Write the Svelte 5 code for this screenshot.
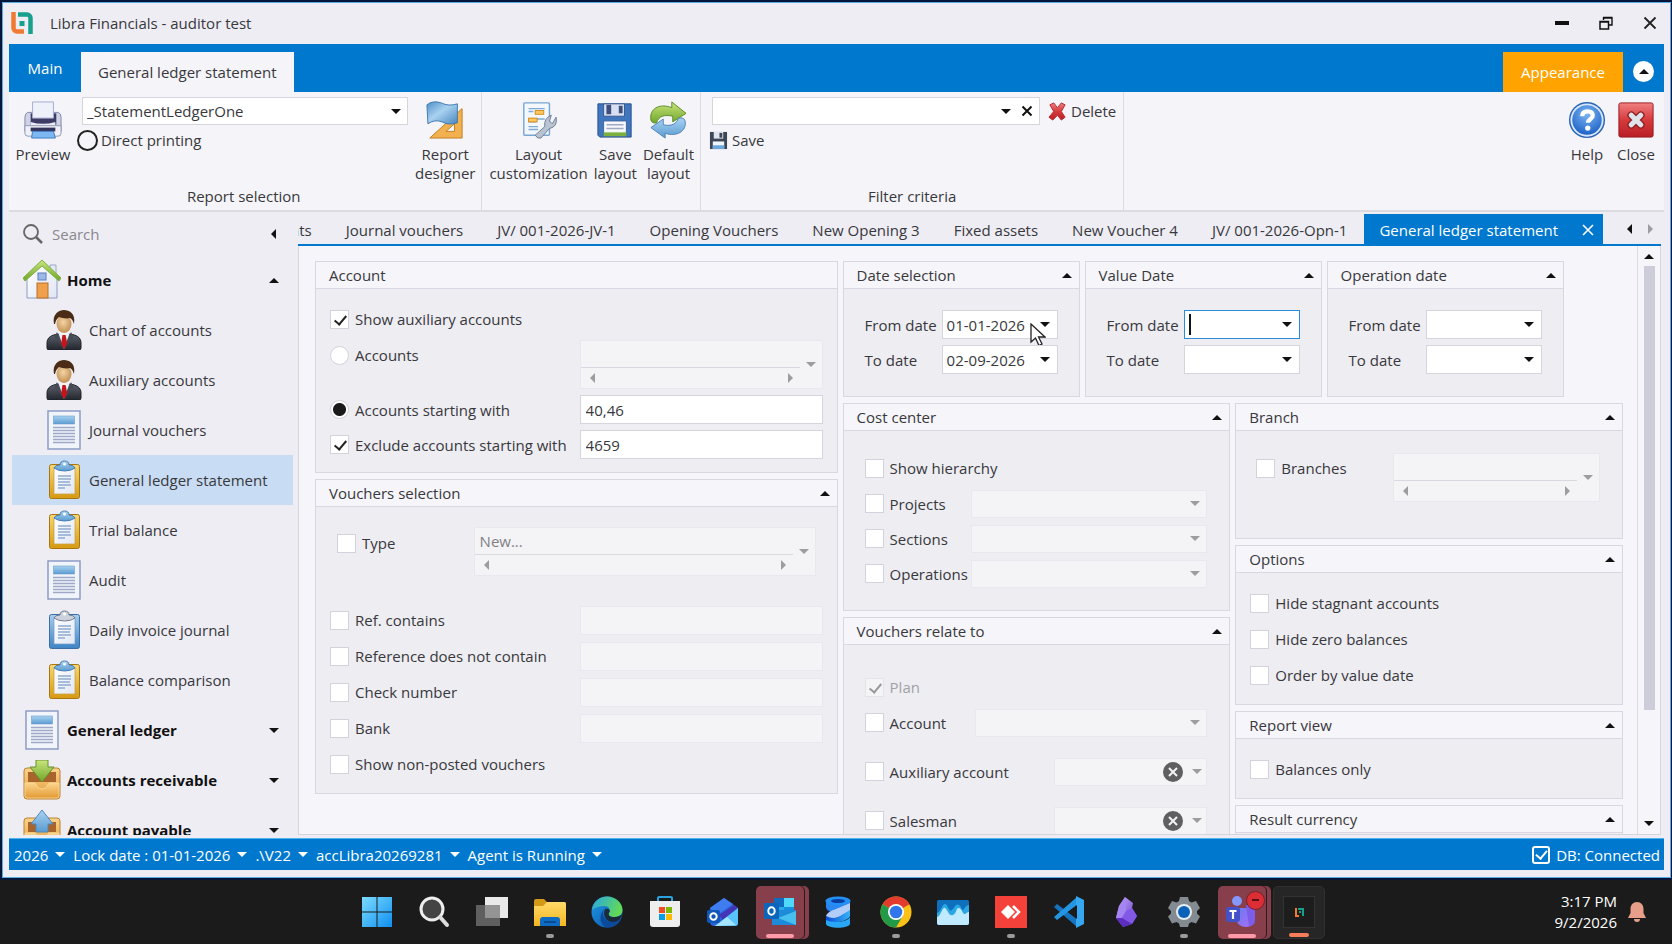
<script>
  const docTabs = [
    'Accounts',
    'Journal vouchers',
    'JV/ 001-2026-JV-1',
    'Opening Vouchers',
    'New Opening 3',
    'Fixed assets',
    'New Voucher 4',
    'JV/ 001-2026-Opn-1'
  ];

  const nav = [
    { label: 'Home', icon: 'home', group: true, open: true },
    { label: 'Chart of accounts', icon: 'person' },
    { label: 'Auxiliary accounts', icon: 'person' },
    { label: 'Journal vouchers', icon: 'page' },
    { label: 'General ledger statement', icon: 'clipGold', selected: true },
    { label: 'Trial balance', icon: 'clipGold' },
    { label: 'Audit', icon: 'page' },
    { label: 'Daily invoice journal', icon: 'clipBlue' },
    { label: 'Balance comparison', icon: 'clipGold' },
    { label: 'General ledger', icon: 'page', group: true },
    { label: 'Accounts receivable', icon: 'trayIn', group: true },
    { label: 'Account payable', icon: 'trayOut', group: true }
  ];

  const refRows = ['Ref. contains', 'Reference does not contain', 'Check number', 'Bank'];
  const costRows = ['Projects', 'Sections', 'Operations'];
  const optionRows = ['Hide stagnant accounts', 'Hide zero balances', 'Order by value date'];
  const statusItems = ['2026', 'Lock date : 01-01-2026', '.\\V22', 'accLibra20269281', 'Agent is Running'];

  const tasks = [
    { name: 'Start', icon: 'start' },
    { name: 'Search', icon: 'search' },
    { name: 'Task view', icon: 'taskview' },
    { name: 'File Explorer', icon: 'explorer', run: true },
    { name: 'Edge', icon: 'edge' },
    { name: 'Store', icon: 'store' },
    { name: 'Mail', icon: 'mail' },
    { name: 'Outlook', icon: 'outlook', alert: true },
    { name: 'Database', icon: 'database' },
    { name: 'Chrome', icon: 'chrome', run: true },
    { name: 'Monitor', icon: 'monitor' },
    { name: 'Remote desktop', icon: 'remote', run: true },
    { name: 'Code', icon: 'code' },
    { name: 'Notes', icon: 'crystal' },
    { name: 'Settings', icon: 'gear', run: true },
    { name: 'Teams', icon: 'teams', alert: true },
    { name: 'Libra', icon: 'libra', current: true }
  ];
</script>

<svg class="defs" width="0" height="0" aria-hidden="true">
  <defs>
    <linearGradient id="gold" x1="0" y1="0" x2="0" y2="1"><stop offset="0" stop-color="#f6d873" /><stop offset="1" stop-color="#d79a12" /></linearGradient>
    <linearGradient id="blueboard" x1="0" y1="0" x2="0" y2="1"><stop offset="0" stop-color="#a8cdec" /><stop offset="1" stop-color="#3f84c4" /></linearGradient>
    <linearGradient id="paper" x1="0" y1="0" x2="1" y2="1"><stop offset="0" stop-color="#ffffff" /><stop offset="1" stop-color="#dfe6f4" /></linearGradient>
    <linearGradient id="sky" x1="0" y1="0" x2="0" y2="1"><stop offset="0" stop-color="#a9d4f2" /><stop offset="1" stop-color="#5b9bd0" /></linearGradient>
    <linearGradient id="tray" x1="0" y1="0" x2="0" y2="1"><stop offset="0" stop-color="#fbd48c" /><stop offset="1" stop-color="#e39a35" /></linearGradient>
    <linearGradient id="leaf" x1="0" y1="0" x2="0" y2="1"><stop offset="0" stop-color="#c9e57c" /><stop offset="1" stop-color="#6fa62a" /></linearGradient>
    <linearGradient id="suit" x1="0" y1="0" x2="0" y2="1"><stop offset="0" stop-color="#5c626c" /><stop offset="1" stop-color="#22262d" /></linearGradient>
    <radialGradient id="skin" cx=".45" cy=".4" r=".7"><stop offset="0" stop-color="#f5d4a4" /><stop offset="1" stop-color="#b88448" /></radialGradient>
    <linearGradient id="red" x1="0" y1="0" x2="0" y2="1"><stop offset="0" stop-color="#f08080" /><stop offset=".5" stop-color="#d63a3d" /><stop offset="1" stop-color="#b81f25" /></linearGradient>
    <radialGradient id="helpblue" cx=".5" cy=".3" r=".8"><stop offset="0" stop-color="#7db6f2" /><stop offset="1" stop-color="#1257c0" /></radialGradient>
    <linearGradient id="flagblue" x1="0" y1="0" x2="1" y2="1"><stop offset="0" stop-color="#4f8fc8" /><stop offset=".45" stop-color="#a9d2f0" /><stop offset="1" stop-color="#4a86c0" /></linearGradient>
    <linearGradient id="winblue" x1="0" y1="0" x2="1" y2="1"><stop offset="0" stop-color="#7ddcff" /><stop offset="1" stop-color="#0f8ff0" /></linearGradient>
    <linearGradient id="folder" x1="0" y1="0" x2="0" y2="1"><stop offset="0" stop-color="#ffdb6a" /><stop offset="1" stop-color="#f5b51f" /></linearGradient>
    <linearGradient id="edgeA" x1="0" y1="0" x2="1" y2="1"><stop offset="0" stop-color="#1f9ae6" /><stop offset="1" stop-color="#0b4fa5" /></linearGradient>
    <linearGradient id="edgeB" x1="0" y1="0" x2="1" y2=".4"><stop offset="0" stop-color="#27a6e8" /><stop offset="1" stop-color="#62d957" /></linearGradient>
    <linearGradient id="ribbonA" x1="0" y1="0" x2="1" y2="0"><stop offset="0" stop-color="#0a4bd8" /><stop offset="1" stop-color="#35b4f7" /></linearGradient>
    <linearGradient id="violet" x1="0" y1="0" x2="1" y2="1"><stop offset="0" stop-color="#c9aefc" /><stop offset="1" stop-color="#5c2fc4" /></linearGradient>
    <linearGradient id="teamsg" x1="0" y1="0" x2="1" y2="1"><stop offset="0" stop-color="#6a7bf2" /><stop offset="1" stop-color="#a86df5" /></linearGradient>
  </defs>
</svg>

{#snippet tri(dir)}
  <svg class="tri" class:side={dir === 'left' || dir === 'right'} viewBox={dir === 'left' || dir === 'right' ? '0 0 5 10' : '0 0 10 5'} aria-hidden="true">
    {#if dir === 'up'}<path d="M0 5 5 0l5 5z" />
    {:else if dir === 'down'}<path d="M0 0h10L5 5z" />
    {:else if dir === 'left'}<path d="M5 0v10L0 5z" />
    {:else}<path d="M0 0v10l5-5z" />{/if}
  </svg>
{/snippet}

{#snippet logo()}
  <svg viewBox="0 0 22 22" aria-hidden="true">
    <path d="M2.500 0v16a3.500 3.500 0 0 0 3.500 3.500H13" fill="none" stroke="#f07a32" stroke-width="4.500" />
    <path d="M7 2.500h9a3.500 3.500 0 0 1 3.500 3.500V22" fill="none" stroke="#17a08e" stroke-width="4.500" />
    <rect x="8.500" y="9" width="5" height="5" fill="#17a08e" />
  </svg>
{/snippet}

{#snippet navIcon(kind)}
  <svg class="nav-icon" viewBox="0 0 38 40" aria-hidden="true">
    {#if kind === 'home'}
      <path d="M27 5h6v12h-6z" fill="#e4e9f5" stroke="#9aa9c8" />
      <path d="M4 18 19 5l15 13v20H4z" fill="url(#paper)" stroke="#8e9cc2" />
      <path d="M0 18 19 0l19 18-2 3L19 6 2 21z" fill="url(#leaf)" stroke="#7fb03a" />
      <rect x="15" y="13" width="8" height="7" fill="#9db9ea" stroke="#5f7dba" />
      <rect x="14" y="23" width="11" height="15" fill="#f0a04a" stroke="#b8702a" />
    {:else if kind === 'person'}
      <path d="M2 38v-5c0-6 5-8 11-9h12c6 1 11 3 11 9v5q0 2-2 2H4q-2 0-2-2z" fill="url(#suit)" stroke="#1e2127" />
      <path d="m13 22 6 17 6-17z" fill="#f2f2f4" />
      <path d="m17.500 25h3l2 9-3.500 5-3-5z" fill="#c4151c" />
      <path d="m12 22-3 6 4 1 5 10-6-17zM26 22l3 6-4 1-5 10 6-17z" fill="#454b55" />
      <ellipse cx="19" cy="14" rx="7.500" ry="9" fill="url(#skin)" />
      <path d="M9 14C7 4 14 0 19 0s12 3 10 14c-1-3-2-5-4-6-4 1-8 0-11-1-2 2-3 3-4 7z" fill="#4a2c17" />
    {:else if kind === 'page'}
      <rect x="3" y="1" width="32" height="38" fill="#f1f4fb" stroke="#8d9cc6" stroke-width="1.500" />
      <rect x="8.500" y="6" width="21" height="8" fill="url(#sky)" stroke="#6f9fca" stroke-width=".6" />
      <path d="M8 17.500h22M8 20.500h22M8 23.500h22M8 26.500h22M8 29.500h22M8 32.500h22" stroke="#9fa9c7" stroke-width="1.500" />
    {:else if kind === 'clipGold' || kind === 'clipBlue'}
      <rect x="4.500" y="4.500" width="30" height="34" rx="2" fill={kind === 'clipGold' ? 'url(#gold)' : 'url(#blueboard)'} stroke={kind === 'clipGold' ? '#a8750f' : '#3a6ea6'} />
      <rect x="9" y="8" width="21" height="26" fill="url(#paper)" stroke={kind === 'clipGold' ? '#c89a3a' : '#6d9cc8'} stroke-width=".7" />
      <path d="M13 16h13M13 19h13M13 22h12M13 25h13M13 28h7" stroke="#8fabd0" stroke-width="1.300" />
      <path d="M9 8q1-3 6-3 0-4 4.500-4T24 5q5 0 6 3-4 3-10.500 3T9 8z" fill={kind === 'clipGold' ? 'url(#sky)' : '#cdd2dc'} stroke={kind === 'clipGold' ? '#477fb9' : '#737d8e'} />
      <circle cx="19.500" cy="4" r="1.500" fill="#fff" />
    {:else if kind === 'trayIn' || kind === 'trayOut'}
      <rect x="1" y="8" width="36" height="31" rx="3" fill="url(#tray)" stroke="#b98134" />
      <path d="M5 12h28v10H5z" fill="#a8642a" />
      <path d="M2 23h9q2 0 3 3 1 3 5 3t5-3q1-3 3-3h9v13q0 2-2 2H4q-2 0-2-2z" fill="url(#tray)" stroke="#f9dc9e" stroke-width=".8" />
      {#if kind === 'trayIn'}
        <path d="M13 0h12v7h6L19 22 7 7h6z" fill="url(#leaf)" stroke="#66902c" />
      {:else}
        <path d="m19 0 11 14h-5v8H13v-8H8z" fill="url(#sky)" stroke="#4f86bd" />
      {/if}
    {/if}
  </svg>
{/snippet}

{#snippet ribbonIcon(kind)}
  <svg class="big-icon" viewBox="0 0 40 40" aria-hidden="true">
    {#if kind === 'printer'}
      <path d="M4 12q-3 1-3 5v15h38V17q0-4-3-5z" fill="#cfd3e6" stroke="#7e84a8" />
      <path d="M7 13h27v12H7z" fill="#3d3c66" />
      <path d="M9 1h22v17H9z" fill="#eef0fa" stroke="#a6abd0" />
      <path d="M7 22q13 4 26 0v6H7z" fill="#e9ebf5" />
      <path d="M1 26h38v8q0 3-3 3H4q-3 0-3-3z" fill="#f0f1f8" stroke="#8e93b4" />
      <path d="M7 28h26v4H7z" fill="#33345c" />
      <path d="M9 32h22l2 7H8z" fill="#7db8f3" stroke="#3f79ba" />
    {:else if kind === 'designer'}
      <path d="M38 8v31H4z" fill="#f3b04e" stroke="#c07d22" />
      <path d="M30 24v8h-9z" fill="#f5f4f8" stroke="#c07d22" />
      <path d="M1 4q6-5 15-2 8 4 17 1v20q-9 3-16-1-8-3-15 2z" fill="url(#flagblue)" stroke="#3e78af" />
    {:else if kind === 'custom'}
      <rect x="4" y="2" width="27" height="34" rx="1" fill="#f3f8fe" stroke="#79a5d2" stroke-width="1.500" />
      <path d="M9 8h17M9 11h5M9 19h17M9 22h8M9 27h10M9 30h10" stroke="#7fa9d6" stroke-width="1.500" />
      <rect x="16" y="10" width="9" height="4" fill="#ffc65c" stroke="#d18f1f" />
      <rect x="9" y="18" width="9" height="4" fill="#ffc65c" stroke="#d18f1f" />
      <path d="M38 17q2 10-7 12l-9 10q-4 1-6-3l10-9q-1-9 7-12l-2 6 3 3z" fill="#b9c3d2" stroke="#6d7c94" />
    {:else if kind === 'floppy'}
      <path d="M2 3h35v35H4l-2-2z" fill="#4076bd" stroke="#244f8c" />
      <path d="M8 3h22v13H8z" fill="#d9dff0" stroke="#38598e" />
      <path d="M11 4h5v10h-5zM24 5h4v8h-4z" fill="#3d4f7c" />
      <path d="M8 21h24v16H8z" fill="#f6f8fc" stroke="#3a639c" />
      <path d="M11 25h18M11 29h18" stroke="#9faac2" stroke-width="1.500" />
      <path d="M8 33h24v4H8z" fill="#7bb040" />
    {:else if kind === 'refresh'}
      <path d="M2 20C0 8 11 2 24 7V1l15 12-14 9v-6c-9-2-15 0-17 7q-5 1-6-3z" fill="url(#leaf)" stroke="#5e8b2b" />
      <path d="M38 21c2 11-9 17-21 13v5L2 28l13-9v6c9 2 14-1 16-7q6-1 7 3z" fill="url(#sky)" stroke="#4e82b6" />
    {:else if kind === 'help'}
      <circle cx="20" cy="20" r="19" fill="#2c65b5" />
      <circle cx="20" cy="20" r="17.500" fill="#d7e7fb" />
      <circle cx="20" cy="20" r="15.500" fill="url(#helpblue)" />
      <path d="M15 16q0-5 5.500-5t5.500 4.500c0 3.500-5 3.500-5 7.500" fill="none" stroke="#fff" stroke-width="4.500" />
      <circle cx="20.800" cy="28.500" r="2.800" fill="#fff" />
    {:else}
      <rect x="2" y="2" width="36" height="36" rx="2" fill="url(#red)" stroke="#98191d" />
      <path d="m15 15 10 10M25 15 15 25" stroke="#8e1e22" stroke-width="8" stroke-linecap="round" />
      <path d="m15 15 10 10M25 15 15 25" stroke="#dfe3ea" stroke-width="5.500" stroke-linecap="round" />
    {/if}
  </svg>
{/snippet}

{#snippet taskIcon(kind)}
  <svg class="task-icon" viewBox="0 0 32 32" aria-hidden="true">
    {#if kind === 'start'}
      <path d="M1 1h14.500v14.500H1zM16.500 1H31v14.500H16.500zM1 16.500h14.500V31H1zM16.500 16.500H31V31H16.500z" fill="url(#winblue)" />
    {:else if kind === 'search'}
      <circle cx="14" cy="13" r="11" fill="#444" stroke="#eee" stroke-width="3" />
      <path d="m22 21 7 8" stroke="#ddd" stroke-width="4" stroke-linecap="round" />
    {:else if kind === 'taskview'}
      <path d="M9 1h23v21H9z" fill="#e9e9e9" />
      <path d="M0 9h24v21H0z" fill="#777" fill-opacity=".75" />
    {:else if kind === 'explorer'}
      <path d="M0 5q0-2 2-2h8l3 3h17q2 0 2 2v6H0z" fill="#d39a17" />
      <path d="M0 10h9l4-4h17q2 0 2 2v22H0z" fill="url(#folder)" />
      <path d="M6 30v-6q0-3 3-3h14q3 0 3 3v6z" fill="#0f6cc4" />
      <path d="M10 26h12" stroke="#0a3f7c" stroke-width="1.500" />
    {:else if kind === 'edge'}
      <circle cx="16" cy="16" r="15.500" fill="url(#edgeA)" />
      <path d="M1 14C2 5 9 .5 16 .5 25 .5 31.500 7 31.500 14c0 5-4 7-8 7-5 0-7-2-5-5 1-3-1-6-5-6-5 0-9 1-12.500 4z" fill="url(#edgeB)" />
      <path d="M13 13c-3 6 1 13 9 13 3 0 6-1 8-3-3 6-8 9-14 8.500C9 30 7 20 13 13z" fill="#0c4a9c" />
      <path d="M18.500 16c-2 3 0 5 5 5 3 0 6-1 7.500-3-1 5-4 8-9 8-7 0-11-7-8-13 3-1 6 1 4.500 3z" fill="#1b1b1b" opacity=".8" />
    {:else if kind === 'store'}
      <path d="M9 7V2q0-1 1-1h12q1 0 1 1v5" fill="none" stroke="#2aa2e0" stroke-width="2" />
      <path d="M1 5h30v23q0 3-3 3H4q-3 0-3-3z" fill="#eee" />
      <path d="M10 11h6v6h-6z" fill="#f04e22" /><path d="M17 11h6v6h-6z" fill="#7cb900" />
      <path d="M10 18h6v6h-6z" fill="#069ee4" /><path d="M17 18h6v6h-6z" fill="#fdb900" />
    {:else if kind === 'mail'}
      <path d="M3 12 17 2l14 10v15q0 3-3 3H7q-3 0-4-3z" fill="#2b63d9" />
      <path d="M3 12 17 2l9 6-16 11z" fill="#3f7cf0" />
      <path d="m12 19 15-10 4 3-15 12z" fill="#4534b6" />
      <path d="M31 12v15q0 3-3 3H8z" fill="#59c3fb" />
      <path d="M8 30 20 21l9 8z" fill="#a5e4ff" />
      <rect x="0" y="14" width="13" height="13" rx="2" fill="#0f57b8" />
      <circle cx="6.500" cy="20.500" r="3.200" fill="none" stroke="#fff" stroke-width="2" />
    {:else if kind === 'outlook'}
      <path d="M10 2h20v18H10z" fill="#28a8ea" />
      <path d="M10 2h10v9H10z" fill="#0f6cc0" /><path d="M20 2h10v9H20z" fill="#50d9ff" /><path d="M20 11h10v9H20z" fill="#1490df" />
      <path d="M8 14h24v15H8z" fill="#1d8bd8" /><path d="M32 15v14L14 22z" fill="#47c0f0" />
      <rect x="0" y="7" width="15" height="16" rx="1" fill="#0b66bb" />
      <ellipse cx="7.500" cy="15" rx="3.200" ry="3.800" fill="none" stroke="#fff" stroke-width="2" />
    {:else if kind === 'database'}
      <path d="M4 5v6c0 4 5 6 12 6s12 1 12 6v-6c0-3-4-5-10-6L4 5z" fill="#1567dd" />
      <path d="M4 5v6q2 5 10 5l14-5V5q-3 4-12 4T4 5z" fill="#2a86f0" />
      <path d="M4 25v-5q1-4 10-7l14-6v7q-1 4-11 7-8 2-13 4z" fill="#b3cdfb" />
      <path d="M4 20q8 4 14 0l10-6v6q-2 4-11 6L4 26z" fill="url(#ribbonA)" />
      <ellipse cx="16" cy="5" rx="12.500" ry="4.500" fill="#2490f5" />
      <ellipse cx="16" cy="5" rx="7" ry="2" fill="#0a3d9e" />
      <path d="M4 24v4c2 5 22 5 24 0v-7c-3 6-19 6-24 3z" fill="#28a7f8" />
    {:else if kind === 'chrome'}
      <circle cx="16" cy="16" r="15.500" fill="#fbc116" />
      <path d="M16 16 2.600 8.200A15.500 15.500 0 0 1 29.400 8.200z" fill="#e33b2e" />
      <path d="M2.600 8.200A15.500 15.500 0 0 0 16 31.500L22.700 20 16 16z" fill="#229a48" />
      <circle cx="16" cy="16" r="8" fill="#fff" /><circle cx="16" cy="16" r="6.300" fill="#2f76ea" />
    {:else if kind === 'monitor'}
      <rect y="4" width="32" height="25" rx="1.500" fill="#0e6fbd" />
      <path d="M0 17c4-1 5-9 8-9s4 9 7 6 4-7 7-5 3 7 5 4 3-4 5-4v17H0z" fill="#2aa7e4" />
      <path d="M0 21c4 0 5-11 8-9s4 9 8 7 3-8 6-7 4 7 6 6 2-2 4-2v11q0 2-2 2H2q-2 0-2-2z" fill="#bfeaff" />
    {:else if kind === 'remote'}
      <path d="M0 0h32v32H0z" fill="#f4423a" />
      <path d="m6 16 7-7 7 7-7 7z" fill="#fff" /><path d="m18 10 6 6-6 6" fill="none" stroke="#fff" stroke-width="2.500" />
    {:else if kind === 'code'}
      <path d="m1 11 3-3 20 15v8z" fill="#1673bf" />
      <path d="m1 21 3 3L24 9V1z" fill="#2495e0" />
      <path d="m23 0 8 4v24l-8 4z" fill="#36a8f2" />
      <path d="m24 9-9 7 9 7z" fill="#1b1b1b" />
    {:else if kind === 'crystal'}
      <path d="m15 1 8 6-1 5 5 8-5 8-9 3-7-9 3-12z" fill="url(#violet)" />
      <path d="m15 1 1 14-4 7-6 0 3-12z" fill="#a485f2" />
      <path d="m16 15 6-3 5 8-5 8-10-6z" fill="#8258e6" /><path d="m12 22 10 6-9 3-7-9z" fill="#5b2dc0" />
    {:else if kind === 'gear'}
      <path d="M12 1h8l1 4 2.500 1.500L28 5l4 7-3 3v2.500l3 3-4 7-4.500-1.500L21 27.500 20 31h-8l-1-3.500L8.500 26 4 27.500l-4-7 3-3V15l-3-3 4-7 4.500 1.500L11 5z" fill="#848a91" />
      <circle cx="16" cy="16" r="8" fill="#e6edf5" /><circle cx="16" cy="16" r="6" fill="#0b62b8" />
    {:else if kind === 'teams'}
      <circle cx="11" cy="5" r="5" fill="#8497fb" />
      <path d="M10 12h18v11q0 8-8 8t-10-8z" fill="url(#teamsg)" /><path d="M20 9h9v15q0 6-6 6z" fill="#7c5ce8" />
      <rect x="0" y="11" width="14" height="15" rx="3" fill="#4451c8" />
      <path d="M3.500 15h7M7 15v8" stroke="#fff" stroke-width="2.200" />
    {:else if kind === 'libra'}
      <rect x=".5" y=".5" width="31" height="31" fill="#1d1d1d" stroke="#333" />
      <path d="M13 12v8h3" fill="none" stroke="#f07a32" stroke-width="2" /><path d="M15 13h5v7" fill="none" stroke="#17a08e" stroke-width="2" /><path d="M16 15h2v2h-2z" fill="#17a08e" />
    {/if}
  </svg>
{/snippet}

{#snippet check(label, opts = {})}
  <label class="check" class:off={opts.disabled}>
    <input type="checkbox" checked={opts.checked} disabled={opts.disabled} />
    <span>{label}</span>
  </label>
{/snippet}

{#snippet multi(label, text = '')}
  <div class="multi">
    <div class="multi-body">
      <input type="text" aria-label={label} value={text} disabled />
      <div class="multi-scroll">
        <button type="button" disabled aria-label="Scroll left">{@render tri('left')}</button>
        <button type="button" disabled aria-label="Scroll right">{@render tri('right')}</button>
      </div>
    </div>
    <button type="button" class="multi-drop" disabled aria-label="Open list">{@render tri('down')}</button>
  </div>
{/snippet}

{#snippet combo(label, clear = false)}
  <div class="combo off">
    <select aria-label={label} disabled><option></option></select>
    {#if clear}
      <svg class="clear" viewBox="0 0 20 20" aria-hidden="true"><circle cx="10" cy="10" r="10" fill="#5f5f61" /><path d="m6 6 8 8M14 6l-8 8" stroke="#f3f3f7" stroke-width="2" /></svg>
    {/if}
    {@render tri('down')}
  </div>
{/snippet}

{#snippet dateRow(id, label, value, opts = {})}
  <div class="date-row">
    <label for={id}>{label}</label>
    <div class="date" class:active={opts.active}>
      {#if opts.active}<span class="caret"></span>{/if}
      <input {id} type="text" {value} />
      <button type="button" aria-label="Pick a date">{@render tri('down')}</button>
      {#if opts.pointer}
        <svg class="pointer" viewBox="0 0 16 24" aria-hidden="true"><path d="M1 1v18l4.500-4 3.500 7.500 3-1.500-3.500-7H15z" fill="#fff" stroke="#222" stroke-width="1.300" /></svg>
      {/if}
    </div>
  </div>
{/snippet}

{#snippet head(title, fold = true)}
  <header class="panel-head">
    <h2>{title}</h2>
    {#if fold}<button type="button" aria-label="Collapse {title}">{@render tri('up')}</button>{/if}
  </header>
{/snippet}

<div class="desktop">
  <div class="window">
    <div class="titlebar">
      <span class="logo">{@render logo()}</span>
      <h1>Libra Financials - auditor test</h1>
      <div class="win-buttons">
        <button type="button" aria-label="Minimize"><svg viewBox="0 0 14 14"><path d="M0 5h14v4H0z" fill="#111" /></svg></button>
        <button type="button" aria-label="Restore"><svg viewBox="0 0 14 14"><path d="M4.500 4V2h8.500v7h-3M4 1.500h9.500" fill="none" stroke="#111" stroke-width="1.400" /><path d="M1 5.500h8.500V13H1zM.5 6h9.500" fill="none" stroke="#111" stroke-width="1.500" /></svg></button>
        <button type="button" aria-label="Close window"><svg viewBox="0 0 14 14"><path d="m1.500 1.500 11 11M12.500 1.500l-11 11" stroke="#222" stroke-width="1.800" /></svg></button>
      </div>
    </div>

    <div class="ribbon-tabs">
      <button type="button" class="main-tab">Main</button>
      <button type="button" class="ribbon-tab">General ledger statement</button>
      <button type="button" class="appearance">Appearance</button>
      <button type="button" class="round" aria-label="Collapse ribbon">{@render tri('up')}</button>
    </div>

    <div class="ribbon">
      <section class="group g-report">
        <div class="group-row">
          <button type="button" class="big preview">{@render ribbonIcon('printer')}<span>Preview</span></button>
          <div class="stack">
            <div class="combo">
              <select aria-label="Report"><option>_StatementLedgerOne</option></select>
              {@render tri('down')}
            </div>
            <label class="direct"><input type="radio" name="direct" /><span>Direct printing</span></label>
          </div>
          <button type="button" class="big">{@render ribbonIcon('designer')}<span>Report<br />designer</span></button>
        </div>
        <p>Report selection</p>
      </section>
      <section class="group">
        <div class="group-row tools">
          <button type="button" class="big">{@render ribbonIcon('custom')}<span>Layout<br />customization</span></button>
          <button type="button" class="big">{@render ribbonIcon('floppy')}<span>Save<br />layout</span></button>
          <button type="button" class="big">{@render ribbonIcon('refresh')}<span>Default<br />layout</span></button>
        </div>
      </section>
      <section class="group g-filter">
        <div class="filter">
          <div class="filter-row">
            <div class="combo">
              <select aria-label="Filter"><option></option></select>
              {@render tri('down')}
              <button type="button" class="x" aria-label="Clear filter"><svg viewBox="0 0 12 12"><path d="m1.500 1.500 9 9M10.500 1.500l-9 9" stroke="#111" stroke-width="2" /></svg></button>
            </div>
            <button type="button" class="small">
              <svg viewBox="0 0 20 20" aria-hidden="true"><path d="M2 3 6 1l4 5 4-5 4 2-4 7 4 6-4 3-4-5-5 5-4-3 5-6z" fill="url(#red)" stroke="#b3262b" /></svg>Delete
            </button>
          </div>
          <button type="button" class="small save">
            <svg viewBox="0 0 20 20" aria-hidden="true"><path d="M1 1h18v18H1z" fill="#3c4654" /><path d="M5 1h10v7H5z" fill="#dfe5ee" /><path d="M11 2h3v5h-3z" fill="#3c4654" /><path d="M4 11h12v8H4z" fill="#eef5fb" /><path d="M4 15h12v4H4z" fill="#6aa7dc" /></svg>Save
          </button>
        </div>
        <p>Filter criteria</p>
      </section>
      <div class="group-row end">
        <button type="button" class="big">{@render ribbonIcon('help')}<span>Help</span></button>
        <button type="button" class="big">{@render ribbonIcon('close')}<span>Close</span></button>
      </div>
    </div>

    <div class="work">
      <aside class="sidebar">
        <div class="search">
          <svg viewBox="0 0 20 20" aria-hidden="true"><circle cx="8" cy="8" r="7" fill="none" stroke="#666" stroke-width="1.800" /><path d="m13 13 6 6" stroke="#666" stroke-width="2.500" /></svg>
          <input type="text" placeholder="Search" aria-label="Search" />
          <button type="button" aria-label="Hide navigation">{@render tri('left')}</button>
        </div>
        <nav>
          {#each nav as item}
            <a href="#top" class:group-link={item.group} class:selected={item.selected}>
              {@render navIcon(item.icon)}
              <span>{item.label}</span>
              {#if item.group}{@render tri(item.open ? 'up' : 'down')}{/if}
            </a>
          {/each}
        </nav>
      </aside>

      <main>
        <div class="tab-strip">
          <div class="tabs">
            {#each docTabs as tab}<button type="button" class="doc-tab">{tab}</button>{/each}
            <button type="button" class="doc-tab current">
              General ledger statement
              <svg viewBox="0 0 12 12" aria-hidden="true"><path d="m1 1 10 10M11 1 1 11" stroke="#fff" stroke-width="1.600" /></svg>
            </button>
          </div>
          <button type="button" class="tab-nav" aria-label="Previous tabs">{@render tri('left')}</button>
          <button type="button" class="tab-nav dim" aria-label="Next tabs">{@render tri('right')}</button>
        </div>

        <div class="content">
          <div class="form">
            <div class="col">
              <section class="panel">
                {@render head('Account', false)}
                <div class="rows account">
                  <div class="row">{@render check('Show auxiliary accounts', { checked: true })}</div>
                  <div class="row tall">
                    <label class="check"><input type="radio" name="mode" /><span>Accounts</span></label>
                    {@render multi('Accounts list')}
                  </div>
                  <div class="row tight">
                    <label class="check"><input type="radio" name="mode" checked /><span>Accounts starting with</span></label>
                    <input class="text" type="text" aria-label="Account prefixes" value="40,46" />
                  </div>
                  <div class="row tight">
                    {@render check('Exclude accounts starting with', { checked: true })}
                    <input class="text" type="text" aria-label="Excluded prefixes" value="4659" />
                  </div>
                </div>
              </section>
              <section class="panel">
                {@render head('Vouchers selection')}
                <div class="rows vouchers">
                  <div class="row type">{@render check('Type')}{@render multi('Voucher type', 'New...')}</div>
                  {#each refRows as r}
                    <div class="row">{@render check(r)}<input class="text" type="text" aria-label={r} disabled /></div>
                  {/each}
                  <div class="row">{@render check('Show non-posted vouchers')}</div>
                </div>
              </section>
            </div>

            <div class="col">
              <div class="dates">
                <section class="panel">
                  {@render head('Date selection')}
                  <div class="date-body">{@render dateRow('d1', 'From date', '01-01-2026', { pointer: true })}{@render dateRow('d2', 'To date', '02-09-2026')}</div>
                </section>
                <section class="panel">
                  {@render head('Value Date')}
                  <div class="date-body">{@render dateRow('d3', 'From date', '', { active: true })}{@render dateRow('d4', 'To date', '')}</div>
                </section>
                <section class="panel">
                  {@render head('Operation date')}
                  <div class="date-body">{@render dateRow('d5', 'From date', '')}{@render dateRow('d6', 'To date', '')}</div>
                </section>
              </div>
              <div class="pair">
                <div class="col">
                  <section class="panel">
                    {@render head('Cost center')}
                    <div class="rows cost">
                      <div class="row">{@render check('Show hierarchy')}</div>
                      {#each costRows as c}<div class="row tight">{@render check(c)}{@render combo(c)}</div>{/each}
                    </div>
                  </section>
                  <section class="panel">
                    {@render head('Vouchers relate to')}
                    <div class="rows relate">
                      <div class="row">{@render check('Plan', { checked: true, disabled: true })}</div>
                      <div class="row tight">{@render check('Account')}{@render combo('Account')}</div>
                      <div class="row tight short">{@render check('Auxiliary account')}{@render combo('Auxiliary account', true)}</div>
                      <div class="row tight short">{@render check('Salesman')}{@render combo('Salesman', true)}</div>
                    </div>
                  </section>
                </div>
                <div class="col">
                  <section class="panel">
                    {@render head('Branch')}
                    <div class="rows branch"><div class="row">{@render check('Branches')}{@render multi('Branch list')}</div></div>
                  </section>
                  <section class="panel">
                    {@render head('Options')}
                    <div class="rows">{#each optionRows as o}<div class="row">{@render check(o)}</div>{/each}</div>
                  </section>
                  <section class="panel">
                    {@render head('Report view')}
                    <div class="rows"><div class="row">{@render check('Balances only')}</div></div>
                  </section>
                  <section class="panel">
                    {@render head('Result currency')}
                    <div class="rows"></div>
                  </section>
                </div>
              </div>
            </div>
          </div>
          <div class="scrollbar">
            {@render tri('up')}
            <div class="track"><div class="thumb"></div></div>
            {@render tri('down')}
          </div>
        </div>
      </main>
    </div>

    <footer class="status">
      {#each statusItems as s}<button type="button">{s}{@render tri('down')}</button>{/each}
      <label><input type="checkbox" checked /><span>DB: Connected</span></label>
    </footer>
  </div>

  <div class="taskbar">
    <div class="apps">
      {#each tasks as t}
        <button type="button" aria-label={t.name} class:alert={t.alert} class:current={t.current}>
          <span class="tile">
            {@render taskIcon(t.icon)}
            {#if t.icon === 'teams'}<span class="badge"></span>{/if}
            {#if t.run || t.alert || t.current}<span class="mark"></span>{/if}
          </span>
        </button>
      {/each}
    </div>
    <div class="tray">
      <div class="clock"><time>3:17 PM</time><time>9/2/2026</time></div>
      <svg viewBox="0 0 20 22" aria-hidden="true"><path d="M10 1c-4 0-6.500 3-6.500 7v4L1 17h18l-2.500-5V8c0-4-2.500-7-6.500-7zM7 18q0 3 3 3t3-3z" fill="#e79f8a" /></svg>
    </div>
  </div>
</div>

<style>
  :global(body) {
    margin: 0;
    overflow: hidden;
  }
  .defs {
    position: absolute;
  }
  .desktop,
  .desktop * {
    box-sizing: border-box;
  }
  .desktop {
    display: flex;
    flex-direction: column;
    height: 100vh;
    padding-top: 2px;
    background: #04173a;
    color: #38383d;
    font: 15px/20px 'Open Sans', 'Segoe UI', sans-serif;
  }
  button,
  input,
  select {
    margin: 0;
    padding: 0;
    border: 0;
    border-radius: 0;
    background: none;
    color: inherit;
    font: inherit;
    appearance: none;
    outline: none;
    min-width: 0;
  }
  h1,
  h2,
  p {
    margin: 0;
    font: inherit;
  }
  svg {
    display: block;
    flex: none;
  }
  .tri {
    width: 10px;
    height: 5px;
    fill: #111;
  }
  .tri.side {
    width: 5px;
    height: 10px;
  }
  .window {
    flex: 1;
    min-height: 0;
    display: flex;
    flex-direction: column;
    margin: 0 1px 2px 2px;
    padding: 0 6px 7px;
    border: 1px solid #5aa9e2;
    background: #eeedf3;
  }

  /* title bar */
  .titlebar {
    display: flex;
    align-items: center;
    height: 41px;
    padding: 0 7px 2px 2px;
  }
  .logo {
    width: 22px;
    margin-right: 17px;
  }
  h1 {
    flex: 1;
  }
  .win-buttons {
    display: flex;
    gap: 30px;
  }
  .win-buttons svg {
    width: 14px;
    height: 14px;
  }

  /* ribbon */
  .ribbon-tabs {
    display: flex;
    align-items: flex-end;
    height: 48px;
    background: #0078ce;
    color: #fff;
  }
  .main-tab {
    width: 72px;
    height: 48px;
    padding-bottom: 1px;
  }
  .ribbon-tab {
    height: 40px;
    padding: 0 17px;
    background: #f5f4f8;
    color: #38383d;
  }
  .appearance {
    width: 120px;
    height: 40px;
    margin-left: auto;
    background: #ffa300;
  }
  .round {
    display: grid;
    place-items: center;
    width: 21px;
    height: 21px;
    margin: 0 10px 10px;
    border-radius: 50%;
    background: #fff;
  }
  .ribbon {
    display: flex;
    height: 120px;
    border-bottom: 2px solid #dcdbe2;
    background: #f5f4f8;
  }
  .group {
    display: flex;
    flex-direction: column;
    justify-content: space-between;
    border-right: 1px solid #dcdbe2;
  }
  .group p {
    padding-bottom: 4px;
    text-align: center;
  }
  .g-report {
    padding-right: 3px;
  }
  .group-row {
    display: flex;
    align-items: flex-start;
  }
  .big {
    display: flex;
    flex-direction: column;
    align-items: center;
    gap: 5px;
    padding: 8px 3px 0;
    line-height: 19px;
    text-align: center;
  }
  .big-icon {
    width: 38px;
    height: 40px;
  }
  .preview {
    width: 68px;
  }
  .stack {
    padding: 5px 4px 0 5px;
  }
  .tools {
    padding: 0 3px 0 4px;
  }
  .combo {
    display: flex;
    align-items: center;
    gap: 10px;
    height: 28px;
    padding-right: 6px;
    border: 1px solid #d6d5de;
    background: #fff;
  }
  .stack .combo {
    width: 326px;
  }
  .combo select {
    flex: 1;
    height: 100%;
    padding-left: 4px;
    opacity: 1;
  }
  .combo.off {
    background: #f4f4f7;
    border-color: #e9e8ee;
  }
  .off .tri,
  .multi .tri,
  .dim .tri {
    fill: #9c9ca1;
  }
  .direct {
    display: flex;
    align-items: center;
    gap: 3px;
    height: 30px;
    margin-left: -5px;
  }
  .direct input {
    width: 21px;
    height: 21px;
    border: 2px solid #222;
    border-radius: 50%;
  }
  .filter {
    padding: 5px 7px 0 11px;
  }
  .filter-row {
    display: flex;
    gap: 8px;
  }
  .filter .combo {
    width: 328px;
  }
  .x svg {
    width: 12px;
    height: 12px;
  }
  .small {
    display: flex;
    align-items: center;
    gap: 4px;
  }
  .small svg {
    width: 19px;
    height: 19px;
  }
  .save {
    height: 30px;
    margin-left: -3px;
  }
  .end {
    margin-left: auto;
    padding-right: 6px;
    gap: 5px;
  }

  /* navigation */
  .work {
    flex: 1;
    display: flex;
    min-height: 0;
    padding-bottom: 3px;
  }
  .sidebar {
    flex: none;
    width: 289px;
    overflow: hidden;
    padding-left: 3px;
  }
  .search {
    display: flex;
    align-items: center;
    height: 43px;
    padding: 0 22px 0 11px;
  }
  .search svg {
    width: 20px;
    height: 20px;
  }
  .search .tri {
    width: 5px;
    height: 10px;
  }
  .search input {
    flex: 1;
    padding-left: 9px;
  }
  .search input::placeholder {
    color: #88888d;
    opacity: 1;
  }
  nav a {
    display: flex;
    align-items: center;
    height: 50px;
    margin-right: 5px;
    padding: 0 14px 0 33px;
    color: inherit;
    text-decoration: none;
  }
  nav a.group-link {
    padding-left: 11px;
    color: #111;
    font-weight: 700;
  }
  nav a.selected {
    background: #c8dcf3;
  }
  nav span {
    flex: 1;
    padding-left: 6px;
  }
  .nav-icon {
    width: 38px;
    height: 40px;
  }

  /* document area */
  main {
    flex: 1;
    min-width: 0;
    display: flex;
    flex-direction: column;
    padding-right: 3px;
  }
  .tab-strip {
    display: flex;
    align-items: center;
    height: 34px;
    padding-top: 2px;
    border-bottom: 2px solid #0078ce;
  }
  .tabs {
    flex: 1;
    min-width: 0;
    display: flex;
    justify-content: flex-end;
    overflow: hidden;
    margin-right: 16px;
  }
  .doc-tab {
    flex: none;
    display: flex;
    align-items: center;
    gap: 24px;
    height: 30px;
    padding: 2px 17px 0;
    white-space: nowrap;
  }
  .doc-tab.current {
    padding: 2px 9px 0 15px;
    background: #0078ce;
    color: #fff;
  }
  .doc-tab svg {
    width: 12px;
    height: 12px;
  }
  .tab-nav {
    padding: 0 8px;
  }
  .content {
    flex: 1;
    min-height: 0;
    display: flex;
    border: 1px solid #d6d5de;
    border-top: 0;
    background: #f6f5f9;
  }
  .form {
    flex: 1;
    min-width: 0;
    display: grid;
    grid-template-columns: 523fr 781fr;
    gap: 5px;
    overflow: hidden;
    padding: 15px 14px 0 16px;
  }
  .col {
    display: flex;
    flex-direction: column;
    gap: 6px;
    min-width: 0;
  }
  .dates {
    display: flex;
    gap: 5px;
  }
  .dates .panel {
    flex: 0 1 237px;
  }
  .pair {
    display: grid;
    grid-template-columns: 1fr 1fr;
    gap: 5px;
  }
  .panel {
    flex: none;
    border: 1px solid #d8d7e2;
    background: #eeedf2;
  }
  .panel-head {
    display: flex;
    align-items: center;
    justify-content: space-between;
    height: 27px;
    padding: 0 7px 0 13px;
    border-bottom: 1px solid #d8d7e2;
    background: #f6f5f9;
  }
  .rows {
    padding: 12px 14px 11px;
  }
  .row {
    display: flex;
    justify-content: space-between;
    min-height: 36px;
  }
  .row.tight {
    min-height: 35px;
  }
  .row > .text,
  .row > .combo {
    align-self: center;
  }
  .check {
    display: flex;
    align-items: center;
    align-self: flex-start;
    gap: 6px;
    height: 36px;
    white-space: nowrap;
  }
  .tight .check {
    height: 35px;
  }
  .check.off {
    color: #a2a2a7;
  }
  .check input {
    position: relative;
    width: 19px;
    height: 19px;
    border: 1px solid #d4d3dd;
    background: #fff;
  }
  .check input[type='radio'] {
    border-radius: 50%;
  }
  .check.off input {
    background: #f4f4f7;
    border-color: #e4e3ea;
  }
  .check input[type='checkbox']:checked::after {
    content: '';
    position: absolute;
    left: 6px;
    top: 2px;
    width: 5px;
    height: 10px;
    border: solid #222;
    border-width: 0 2px 2px 0;
    transform: rotate(40deg);
  }
  .check.off input:checked::after {
    border-color: #98989d;
  }
  .check input[type='radio']:checked {
    background: radial-gradient(circle, #1a1a1a 6px, #fff 7px);
  }
  .text {
    width: 243px;
    height: 29px;
    padding: 0 5px;
    border: 1px solid #d6d5de;
    background: #fff;
  }
  .text:disabled {
    background: #f4f4f7;
    border-color: #e9e8ee;
  }
  .multi {
    display: flex;
    width: 243px;
    height: 49px;
    margin-top: 3px;
    border: 1px solid #e9e8ee;
    background: #f4f4f7;
  }
  .multi-body {
    flex: 1;
    min-width: 0;
    display: flex;
    flex-direction: column;
  }
  .multi-body input {
    height: 27px;
    padding: 0 5px;
    border-bottom: 1px solid #dad9e2;
    color: #808085;
  }
  .multi-scroll {
    flex: 1;
    display: flex;
    align-items: center;
    justify-content: space-between;
    padding: 0 7px 0 9px;
  }
  .multi-drop {
    width: 22px;
    padding-left: 6px;
  }
  .account {
    padding-bottom: 10px;
  }
  .account .tall {
    min-height: 55px;
  }
  .vouchers {
    padding-top: 18px;
  }
  .vouchers .type {
    min-height: 77px;
    padding: 0 7px;
  }
  .type .multi {
    width: 342px;
    margin-top: 2px;
  }
  .cost {
    padding: 19px 22px 19px 21px;
  }
  .cost .combo {
    width: 236px;
  }
  .relate {
    padding: 24px 22px 20px 21px;
  }
  .relate .combo {
    width: 232px;
  }
  .relate .short {
    margin-top: 14px;
  }
  .relate .short .combo {
    width: 153px;
    gap: 9px;
    padding-right: 4px;
  }
  .relate .clear {
    width: 20px;
    height: 20px;
  }
  .branch {
    padding: 19px 22px 36px 20px;
  }
  .branch .multi {
    width: 207px;
  }
  .date-body {
    padding: 18px 21px 19px;
  }
  .date-row {
    display: flex;
    align-items: center;
    justify-content: space-between;
    height: 35px;
  }
  .date {
    position: relative;
    display: flex;
    align-items: center;
    width: 116px;
    height: 29px;
    padding: 0 7px 0 4px;
    border: 1px solid #d6d5de;
    background: #fff;
  }
  .date.active {
    border-color: #2a8bd8;
  }
  .date input {
    flex: 1;
    width: 0;
  }
  .caret {
    width: 2px;
    height: 21px;
    background: #111;
  }
  .pointer {
    position: absolute;
    left: 87px;
    top: 12px;
    width: 16px;
    height: 24px;
  }
  .scrollbar {
    display: flex;
    flex-direction: column;
    align-items: center;
    gap: 7px;
    width: 23px;
    padding: 8px 0;
    border-left: 1px solid #dcdbe4;
  }
  .track {
    flex: 1;
    width: 11px;
  }
  .thumb {
    height: 81%;
    background: #cdccd9;
  }

  /* status bar */
  .status {
    flex: none;
    display: flex;
    align-items: center;
    height: 32px;
    padding: 0 4px 0 5px;
    border-top: 1px solid #4fb3ee;
    background: #0078ce;
    color: #fff;
  }
  .status button {
    display: flex;
    align-items: center;
    gap: 7px;
    margin-right: 8px;
  }
  .status .tri {
    fill: #fff;
  }
  .status label {
    display: flex;
    align-items: center;
    gap: 6px;
    margin-left: auto;
  }
  .status input {
    position: relative;
    width: 18px;
    height: 18px;
    border: 2px solid #fff;
    border-radius: 3px;
  }
  .status input::after {
    content: '';
    position: absolute;
    left: 4px;
    top: 0;
    width: 5px;
    height: 9px;
    border: solid #fff;
    border-width: 0 2px 2px 0;
    transform: rotate(40deg);
  }

  /* taskbar */
  .taskbar {
    display: grid;
    grid-template-columns: 1fr 980px 1fr;
    align-items: center;
    height: 64px;
    padding-left: 4px;
    background: #1b1b1b;
    color: #fff;
  }
  .apps {
    grid-column: 2;
    display: grid;
    grid-template-columns: repeat(17, 1fr);
    justify-items: center;
  }
  .tile {
    position: relative;
    display: grid;
    place-items: center;
    width: 52px;
    height: 53px;
    border-radius: 5px;
  }
  .task-icon {
    width: 32px;
    height: 32px;
  }
  .alert .tile {
    width: 48px;
    background: #863f4b;
    box-shadow: 1px 0 0 #2c1a1d, 5px 0 0 #863f4b;
  }
  .current .tile {
    background: #262626;
    border: 1px solid #303030;
  }
  .mark {
    position: absolute;
    bottom: 1px;
    width: 8px;
    height: 4px;
    border-radius: 2px;
    background: #9a9a9a;
  }
  .alert .mark {
    width: 28px;
    background: #ff9aa8;
  }
  .current .mark {
    width: 20px;
    background: #f47c58;
  }
  .badge {
    position: absolute;
    top: 5px;
    right: 1px;
    width: 19px;
    height: 19px;
    border: 1px solid #7b2028;
    border-radius: 50%;
    background: linear-gradient(#5a1013, #5a1013) center / 7px 2px no-repeat #dc2f35;
  }
  .tray {
    display: flex;
    align-items: center;
    justify-content: flex-end;
    gap: 10px;
    padding-right: 25px;
  }
  .tray svg {
    width: 20px;
    height: 22px;
  }
  .clock {
    display: flex;
    flex-direction: column;
    text-align: right;
    line-height: 21px;
  }
</style>
